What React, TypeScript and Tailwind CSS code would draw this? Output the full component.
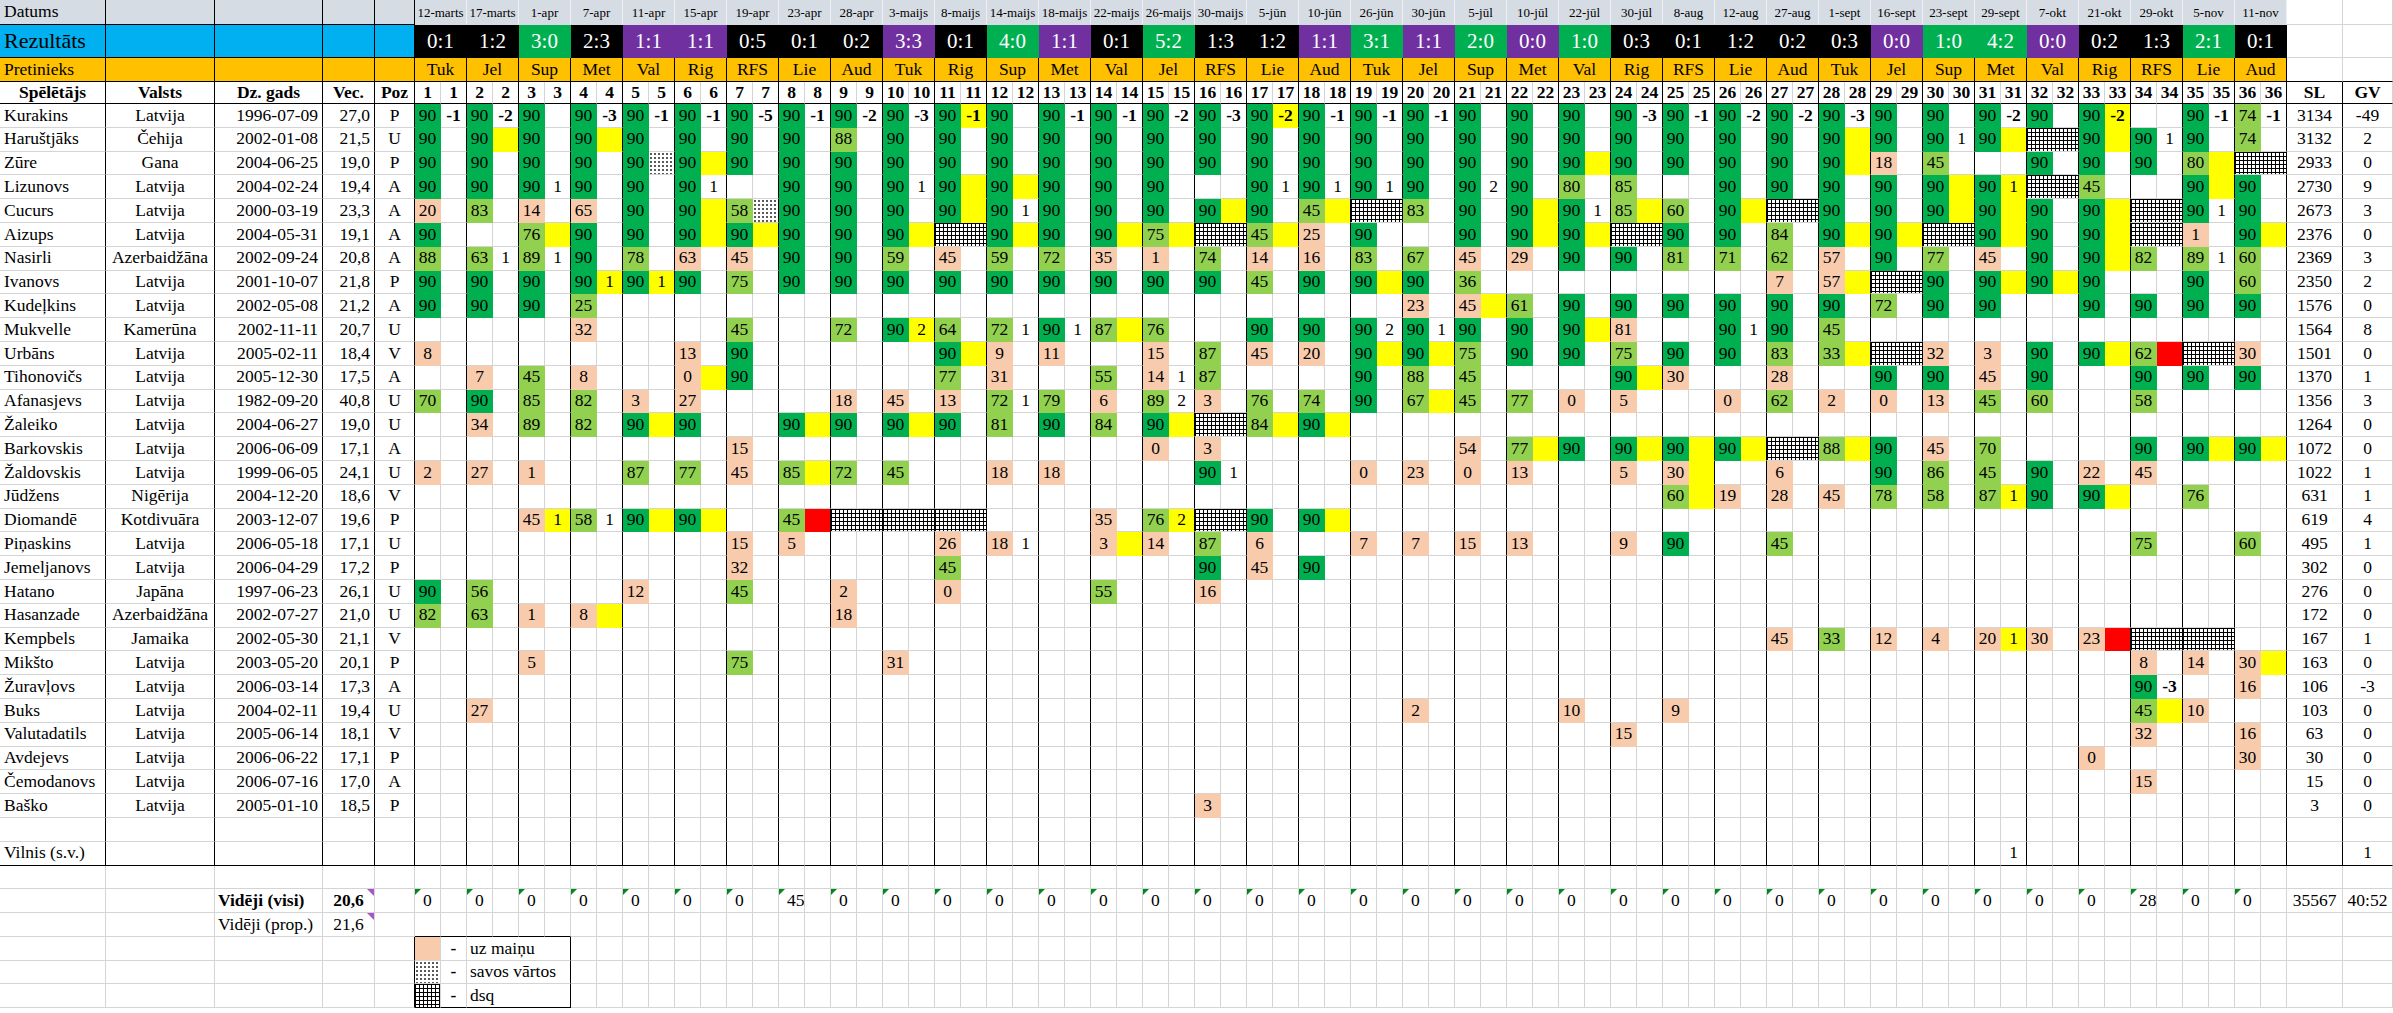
import React from "react";

const G = "grid grid-cols-[106px_109px_108px_52px_40px_repeat(72,26px)_56px_50px]";
const CB = "relative flex items-center border-r border-b whitespace-nowrap overflow-visible";
const GRAY = "border-r-[#d4d4d4] border-b-[#d4d4d4]";
const DOTS =
  "bg-white bg-[image:radial-gradient(circle,#000_0.6px,transparent_0.9px)] bg-[length:4px_4px]";
const HATCH =
  "bg-white bg-[image:linear-gradient(90deg,#000_1px,transparent_1px),linear-gradient(#000_1px,transparent_1px)] bg-[length:4px_4px]";

type Res = "B" | "G" | "P";
const MATCHES: [string, string, Res, string][] = [
  ["12-marts", "0:1", "B", "Tuk"],
  ["17-marts", "1:2", "B", "Jel"],
  ["1-apr", "3:0", "G", "Sup"],
  ["7-apr", "2:3", "B", "Met"],
  ["11-apr", "1:1", "P", "Val"],
  ["15-apr", "1:1", "P", "Rig"],
  ["19-apr", "0:5", "B", "RFS"],
  ["23-apr", "0:1", "B", "Lie"],
  ["28-apr", "0:2", "B", "Aud"],
  ["3-maijs", "3:3", "P", "Tuk"],
  ["8-maijs", "0:1", "B", "Rig"],
  ["14-maijs", "4:0", "G", "Sup"],
  ["18-maijs", "1:1", "P", "Met"],
  ["22-maijs", "0:1", "B", "Val"],
  ["26-maijs", "5:2", "G", "Jel"],
  ["30-maijs", "1:3", "B", "RFS"],
  ["5-jūn", "1:2", "B", "Lie"],
  ["10-jūn", "1:1", "P", "Aud"],
  ["26-jūn", "3:1", "G", "Tuk"],
  ["30-jūn", "1:1", "P", "Jel"],
  ["5-jūl", "2:0", "G", "Sup"],
  ["10-jūl", "0:0", "P", "Met"],
  ["22-jūl", "1:0", "G", "Val"],
  ["30-jūl", "0:3", "B", "Rig"],
  ["8-aug", "0:1", "B", "RFS"],
  ["12-aug", "1:2", "B", "Lie"],
  ["27-aug", "0:2", "B", "Aud"],
  ["1-sept", "0:3", "B", "Tuk"],
  ["16-sept", "0:0", "P", "Jel"],
  ["23-sept", "1:0", "G", "Sup"],
  ["29-sept", "4:2", "G", "Met"],
  ["7-okt", "0:0", "P", "Val"],
  ["21-okt", "0:2", "B", "Rig"],
  ["29-okt", "1:3", "B", "RFS"],
  ["5-nov", "2:1", "G", "Lie"],
  ["11-nov", "0:1", "B", "Aud"],
];

const RES: Record<Res, string> = {
  B: "bg-black border-r-black border-b-black",
  G: "bg-[#00b050] border-r-[#00b050] border-b-[#00b050]",
  P: "bg-[#7030a0] border-r-[#7030a0] border-b-[#7030a0]",
};

type Player = {
  n: string;
  c: string;
  d: string;
  a: string;
  p: string;
  sl: string;
  gv: string;
  def: string;
  o: Record<number, string>;
};

const PLAYERS: Player[] = [
  { n: "Kurakins", c: "Latvija", d: "1996-07-09", a: "27,0", p: "P", sl: "3134", gv: "-49", def: "90G",
    o: { 1: "90G,-1", 2: "90G,-2", 4: "90G,-3", 5: "90G,-1", 6: "90G,-1", 7: "90G,-5", 8: "90G,-1", 9: "90G,-2", 10: "90G,-3", 11: "90G,-1Y", 13: "90G,-1", 14: "90G,-1", 15: "90G,-2", 16: "90G,-3", 17: "90G,-2Y", 18: "90G,-1", 19: "90G,-1", 20: "90G,-1", 24: "90G,-3", 25: "90G,-1", 26: "90G,-2", 27: "90G,-2", 28: "90G,-3", 31: "90G,-2", 33: "90G,-2Y", 34: ".", 35: "90G,-1", 36: "74L,-1" } },
  { n: "Haruštjāks", c: "Čehija", d: "2002-01-08", a: "21,5", p: "U", sl: "3132", gv: "2", def: "90G",
    o: { 2: "90G,Y", 4: "90G,Y", 9: "88L", 28: "90G,Y", 30: "90G,1", 31: "90G,Y", 32: "D", 33: "90G,Y", 34: "90G,1", 36: "74L" } },
  { n: "Zūre", c: "Gana", d: "2004-06-25", a: "19,0", p: "P", sl: "2933", gv: "0", def: "90G",
    o: { 5: "90G,S", 6: "90G,Y", 23: "90G,Y", 28: "90G,Y", 29: "18P", 30: "45L", 31: ".", 35: "80L,Y", 36: "D" } },
  { n: "Lizunovs", c: "Latvija", d: "2004-02-24", a: "19,4", p: "A", sl: "2730", gv: "9", def: "90G",
    o: { 3: "90G,1", 6: "90G,1", 7: ".", 10: "90G,1", 11: "90G,Y", 12: "90G,Y", 16: ".", 17: "90G,1", 18: "90G,1", 19: "90G,1", 21: "90G,2", 23: "80L", 24: "85L", 25: ".", 30: "90G,Y", 31: "90G,1Y", 32: "D", 33: "45L", 34: ".", 35: "90G,Y" } },
  { n: "Cucurs", c: "Latvija", d: "2000-03-19", a: "23,3", p: "A", sl: "2673", gv: "3", def: "90G",
    o: { 1: "20P", 2: "83L", 3: "14P", 4: "65P", 6: "90G,Y", 7: "58L,S", 11: "90G,Y", 12: "90G,1", 16: "90G,Y", 18: "45L,Y", 19: "D", 20: "83L", 22: "90G,Y", 23: "90G,1", 24: "85L,Y", 25: "60L", 26: "90G,Y", 27: "D", 30: "90G,Y", 31: "90G,Y", 33: "90G,Y", 34: "D", 35: "90G,1" } },
  { n: "Aizups", c: "Latvija", d: "2004-05-31", a: "19,1", p: "A", sl: "2376", gv: "0", def: "90G",
    o: { 2: ".", 3: "76L,Y", 6: "90G,Y", 7: "90G,Y", 10: "90G,Y", 11: "D", 12: "90G,Y", 14: "90G,Y", 15: "75L,Y", 16: "D", 17: "45L,Y", 18: "25P", 20: ".", 22: "90G,Y", 23: "90G,Y", 24: "D", 27: "84L", 28: "90G,Y", 29: "90G,Y", 30: "D", 31: "90G,Y", 33: "90G,Y", 34: "D", 35: "1P", 36: "90G,Y" } },
  { n: "Nasirli", c: "Azerbaidžāna", d: "2002-09-24", a: "20,8", p: "A", sl: "2369", gv: "3", def: ".",
    o: { 1: "88L", 2: "63L,1", 3: "89L,1", 4: "90G", 5: "78L", 6: "63P", 7: "45P", 8: "90G", 9: "90G", 10: "59L", 11: "45P", 12: "59L", 13: "72L", 14: "35P", 15: "1P", 16: "74L", 17: "14P", 18: "16P", 19: "83L", 20: "67L", 21: "45P", 22: "29P", 23: "90G", 24: "90G", 25: "81L", 26: "71L", 27: "62L", 28: "57P", 29: "90G", 30: "77L", 31: "45P", 32: "90G", 33: "90G,Y", 34: "82L", 35: "89L,1", 36: "60L" } },
  { n: "Ivanovs", c: "Latvija", d: "2001-10-07", a: "21,8", p: "P", sl: "2350", gv: "2", def: "90G",
    o: { 4: "90G,1Y", 5: "90G,1Y", 7: "75L", 17: "45L", 19: "90G,Y", 21: "36L", 22: ".", 23: ".", 24: ".", 25: ".", 26: ".", 27: "7P", 28: "57P,Y", 29: "D", 31: "90G,Y", 32: "90G,Y", 34: ".", 36: "60L" } },
  { n: "Kudeļkins", c: "Latvija", d: "2002-05-08", a: "21,2", p: "A", sl: "1576", gv: "0", def: ".",
    o: { 1: "90G", 2: "90G", 3: "90G", 4: "25L", 20: "23P", 21: "45P,Y", 22: "61L", 23: "90G", 24: "90G", 25: "90G", 26: "90G", 27: "90G", 28: "90G", 29: "72L", 30: "90G", 31: "90G", 33: "90G", 34: "90G", 35: "90G", 36: "90G" } },
  { n: "Mukvelle", c: "Kamerūna", d: "2002-11-11", a: "20,7", p: "U", sl: "1564", gv: "8", def: ".",
    o: { 4: "32P", 7: "45L", 9: "72L", 10: "90G,2Y", 11: "64L", 12: "72L,1", 13: "90G,1", 14: "87L,Y", 15: "76L", 17: "90G", 18: "90G", 19: "90G,2", 20: "90G,1", 21: "90G", 22: "90G", 23: "90G,Y", 24: "81P", 26: "90G,1", 27: "90G", 28: "45L" } },
  { n: "Urbāns", c: "Latvija", d: "2005-02-11", a: "18,4", p: "V", sl: "1501", gv: "0", def: ".",
    o: { 1: "8P", 6: "13P", 7: "90G", 11: "90G,Y", 12: "9P", 13: "11P", 15: "15P", 16: "87L", 17: "45P", 18: "20P", 19: "90G,Y", 20: "90G,Y", 21: "75L", 22: "90G", 23: "90G", 24: "75L", 25: "90G", 26: "90G", 27: "83L", 28: "33L,Y", 29: "D", 30: "32P", 31: "3P", 32: "90G", 33: "90G,Y", 34: "62L,R", 35: "D", 36: "30P" } },
  { n: "Tihonovičs", c: "Latvija", d: "2005-12-30", a: "17,5", p: "A", sl: "1370", gv: "1", def: ".",
    o: { 2: "7P", 3: "45L", 4: "8P", 6: "0P,Y", 7: "90G", 11: "77L", 12: "31P", 14: "55L", 15: "14P,1", 16: "87L", 19: "90G", 20: "88L", 21: "45L", 24: "90G,Y", 25: "30P", 27: "28P", 29: "90G", 30: "90G", 31: "45P", 32: "90G", 34: "90G", 35: "90G", 36: "90G" } },
  { n: "Afanasjevs", c: "Latvija", d: "1982-09-20", a: "40,8", p: "U", sl: "1356", gv: "3", def: ".",
    o: { 1: "70L", 2: "90G", 3: "85L", 4: "82L", 5: "3P", 6: "27P", 9: "18P", 10: "45P", 11: "13P", 12: "72L,1", 13: "79L", 14: "6P", 15: "89L,2", 16: "3P", 17: "76L", 18: "74L", 19: "90G", 20: "67L,Y", 21: "45L", 22: "77L", 23: "0P", 24: "5P", 26: "0P", 27: "62L", 28: "2P", 29: "0P", 30: "13P", 31: "45L", 32: "60L", 34: "58L" } },
  { n: "Žaleiko", c: "Latvija", d: "2004-06-27", a: "19,0", p: "U", sl: "1264", gv: "0", def: ".",
    o: { 2: "34P", 3: "89L", 4: "82L", 5: "90G,Y", 6: "90G", 8: "90G,Y", 9: "90G", 10: "90G,Y", 11: "90G", 12: "81L", 13: "90G", 14: "84L", 15: "90G,Y", 16: "D", 17: "84L,Y", 18: "90G,Y" } },
  { n: "Barkovskis", c: "Latvija", d: "2006-06-09", a: "17,1", p: "A", sl: "1072", gv: "0", def: ".",
    o: { 7: "15P", 15: "0P", 16: "3P", 21: "54P", 22: "77L,Y", 23: "90G", 24: "90G,Y", 25: "90G,Y", 26: "90G,Y", 27: "D", 28: "88L,Y", 29: "90G", 30: "45P", 31: "70L", 34: "90G", 35: "90G,Y", 36: "90G,Y" } },
  { n: "Žaldovskis", c: "Latvija", d: "1999-06-05", a: "24,1", p: "U", sl: "1022", gv: "1", def: ".",
    o: { 1: "2P", 2: "27P", 3: "1P", 5: "87L", 6: "77L", 7: "45P", 8: "85L,Y", 9: "72L", 10: "45L", 12: "18P", 13: "18P", 16: "90G,1", 19: "0P", 20: "23P", 21: "0P", 22: "13P", 24: "5P", 25: "30P,Y", 27: "6P", 29: "90G", 30: "86L", 31: "45L", 32: "90G", 33: "22P", 34: "45P" } },
  { n: "Jūdžens", c: "Nigērija", d: "2004-12-20", a: "18,6", p: "V", sl: "631", gv: "1", def: ".",
    o: { 25: "60L,Y", 26: "19P", 27: "28P", 28: "45P", 29: "78L", 30: "58L", 31: "87L,1Y", 32: "90G", 33: "90G,Y", 35: "76L" } },
  { n: "Diomandē", c: "Kotdivuāra", d: "2003-12-07", a: "19,6", p: "P", sl: "619", gv: "4", def: ".",
    o: { 3: "45P,1Y", 4: "58L,1", 5: "90G,Y", 6: "90G,Y", 8: "45L,R", 9: "D", 10: "D", 11: "D", 14: "35P", 15: "76L,2Y", 16: "D", 17: "90G", 18: "90G,Y" } },
  { n: "Piņaskins", c: "Latvija", d: "2006-05-18", a: "17,1", p: "U", sl: "495", gv: "1", def: ".",
    o: { 7: "15P", 8: "5P", 11: "26P", 12: "18P,1", 14: "3P,Y", 15: "14P", 16: "87L", 17: "6P", 19: "7P", 20: "7P", 21: "15P", 22: "13P", 24: "9P", 25: "90G", 27: "45L", 34: "75L", 36: "60L" } },
  { n: "Jemeljanovs", c: "Latvija", d: "2006-04-29", a: "17,2", p: "P", sl: "302", gv: "0", def: ".",
    o: { 7: "32P", 11: "45L", 16: "90G", 17: "45P", 18: "90G" } },
  { n: "Hatano", c: "Japāna", d: "1997-06-23", a: "26,1", p: "U", sl: "276", gv: "0", def: ".",
    o: { 1: "90G", 2: "56L", 5: "12P", 7: "45L", 9: "2P", 11: "0P", 14: "55L", 16: "16P" } },
  { n: "Hasanzade", c: "Azerbaidžāna", d: "2002-07-27", a: "21,0", p: "U", sl: "172", gv: "0", def: ".",
    o: { 1: "82L", 2: "63L", 3: "1P", 4: "8P,Y", 9: "18P" } },
  { n: "Kempbels", c: "Jamaika", d: "2002-05-30", a: "21,1", p: "V", sl: "167", gv: "1", def: ".",
    o: { 27: "45P", 28: "33L", 29: "12P", 30: "4P", 31: "20P,1Y", 32: "30P", 33: "23P,R", 34: "D", 35: "D" } },
  { n: "Mikšto", c: "Latvija", d: "2003-05-20", a: "20,1", p: "P", sl: "163", gv: "0", def: ".",
    o: { 3: "5P", 7: "75L", 10: "31P", 34: "8P", 35: "14P", 36: "30P,Y" } },
  { n: "Žuravļovs", c: "Latvija", d: "2006-03-14", a: "17,3", p: "A", sl: "106", gv: "-3", def: ".",
    o: { 34: "90G,-3", 36: "16P" } },
  { n: "Buks", c: "Latvija", d: "2004-02-11", a: "19,4", p: "U", sl: "103", gv: "0", def: ".",
    o: { 2: "27P", 20: "2P", 23: "10P", 25: "9P", 34: "45L,Y", 35: "10P" } },
  { n: "Valutadatils", c: "Latvija", d: "2005-06-14", a: "18,1", p: "V", sl: "63", gv: "0", def: ".",
    o: { 24: "15P", 34: "32P", 36: "16P" } },
  { n: "Avdejevs", c: "Latvija", d: "2006-06-22", a: "17,1", p: "P", sl: "30", gv: "0", def: ".",
    o: { 33: "0P", 36: "30P" } },
  { n: "Čemodanovs", c: "Latvija", d: "2006-07-16", a: "17,0", p: "A", sl: "15", gv: "0", def: ".",
    o: { 34: "15P" } },
  { n: "Baško", c: "Latvija", d: "2005-01-10", a: "18,5", p: "P", sl: "3", gv: "0", def: ".",
    o: { 16: "3P" } },
];

const AF: Record<string, string> = {
  "": "border-r-[#d4d4d4] border-b-[#d4d4d4]",
  G: "bg-[#00b050] border-r-[#00b050] border-b-[#00b050]",
  L: "bg-[#92d050] border-r-[#92d050] border-b-[#92d050]",
  P: "bg-[#f8cbad] border-r-[#f8cbad] border-b-[#f8cbad]",
};
const BF: Record<string, string> = {
  "": "border-r-black border-b-[#d4d4d4]",
  Y: "bg-[#ffff00] border-r-black border-b-[#ffff00]",
  R: "bg-[#ff0000] border-r-black border-b-[#ff0000]",
  S: DOTS + " border-r-black border-b-[#d4d4d4]",
};

function MatchCells({ tok, bottom }: { tok: string; bottom?: boolean }) {
  if (tok === "D") {
    return <div className={`${CB} col-span-2 ${HATCH} border-r-black ${bottom ? "border-b-black" : "border-b-[#d4d4d4]"}`} />;
  }
  let a = "";
  let af = "";
  let b = "";
  let bf = "";
  if (tok && tok !== ".") {
    const [A, B] = tok.split(",");
    if (A) {
      af = A.slice(-1);
      a = A.slice(0, -1);
    }
    if (B) {
      if (B === "S") bf = "S";
      else if (B.endsWith("Y") || B.endsWith("R")) {
        bf = B.slice(-1);
        b = B.slice(0, -1);
      } else b = B;
    }
  }
  return (
    <>
      <div className={`${CB} justify-center ${AF[af]} ${bottom ? "border-b-black" : ""}`}>{a}</div>
      <div className={`${CB} justify-center ${BF[bf]} ${b.startsWith("-") ? "font-bold" : ""} ${bottom ? "border-b-black" : ""}`}>
        {b}
      </div>
    </>
  );
}

const LEFT = "border-r-black border-b-[#d4d4d4]";

function Greentri() {
  return (
    <svg className="absolute left-0 top-0" width="6" height="6" viewBox="0 0 6 6">
      <path d="M0 0H6L0 6Z" fill="#008a1e" />
    </svg>
  );
}
function Purpletri() {
  return (
    <svg className="absolute right-0 top-0" width="7" height="7" viewBox="0 0 7 7">
      <path d="M0 0H7V7Z" fill="#a855c8" />
    </svg>
  );
}

function GrayCells({ n }: { n: number }) {
  return (
    <>
      {Array.from({ length: n }).map((_, i) => (
        <div key={i} className={`${CB} ${GRAY}`} />
      ))}
    </>
  );
}

export default function App() {
  return (
    <div className="w-[2393px] h-[1013px] overflow-hidden bg-white [font-family:'Liberation_Serif','Times_New_Roman',serif] text-[17.5px] leading-none text-black">
      {/* Datums */}
      <div className={`${G} h-[25px]`}>
        <div className={`${CB} bg-[#d6dce4] border-r-black border-b-black justify-start pl-[4px]`}>Datums</div>
        {[0, 1, 2, 3].map((i) => (
          <div key={i} className={`${CB} bg-[#d6dce4] border-r-black border-b-black`} />
        ))}
        {MATCHES.map((m, i) => (
          <div key={i} className={`${CB} col-span-2 justify-center bg-[#d6dce4] border-r-[#eef0f4] border-b-[#d6dce4] text-[13px]`}>
            {m[0]}
          </div>
        ))}
        <GrayCells n={2} />
      </div>
      {/* Rezultāts */}
      <div className={`${G} h-[33px]`}>
        <div className={`${CB} bg-[#00b0f0] border-r-black border-b-black justify-start pl-[4px] text-[22px]`}>Rezultāts</div>
        {[0, 1, 2, 3].map((i) => (
          <div key={i} className={`${CB} bg-[#00b0f0] border-r-black border-b-black`} />
        ))}
        {MATCHES.map((m, i) => (
          <div key={i} className={`${CB} col-span-2 justify-center text-white text-[21px] ${RES[m[2]]}`}>
            {m[1]}
          </div>
        ))}
        <GrayCells n={2} />
      </div>
      {/* Pretinieks */}
      <div className={`${G} h-[24px]`}>
        <div className={`${CB} bg-[#ffc000] border-r-black border-b-black justify-start pl-[4px]`}>Pretinieks</div>
        {[0, 1, 2, 3].map((i) => (
          <div key={i} className={`${CB} bg-[#ffc000] border-r-black border-b-black`} />
        ))}
        {MATCHES.map((m, i) => (
          <div key={i} className={`${CB} col-span-2 justify-center bg-[#ffc000] border-r-black border-b-black`}>
            {m[3]}
          </div>
        ))}
        <div className={`${CB} border-r-[#d4d4d4] border-b-black`} />
        <div className={`${CB} border-r-[#d4d4d4] border-b-black`} />
      </div>
      {/* Header */}
      <div className={`${G} h-[22px] font-bold`}>
        {["Spēlētājs", "Valsts", "Dz. gads", "Vec.", "Poz"].map((t) => (
          <div key={t} className={`${CB} justify-center border-r-black border-b-black`}>
            {t}
          </div>
        ))}
        {MATCHES.map((_, i) => (
          <React.Fragment key={i}>
            <div className={`${CB} justify-center border-r-[#d4d4d4] border-b-black`}>{i + 1}</div>
            <div className={`${CB} justify-center border-r-black border-b-black`}>{i + 1}</div>
          </React.Fragment>
        ))}
        <div className={`${CB} justify-center border-r-black border-b-black`}>SL</div>
        <div className={`${CB} justify-center border-r-[#d4d4d4] border-b-black`}>GV</div>
      </div>
      {/* Players */}
      {PLAYERS.map((p) => (
        <div key={p.n} className={`${G} h-[23.8px]`}>
          <div className={`${CB} ${LEFT} justify-start pl-[4px]`}>{p.n}</div>
          <div className={`${CB} ${LEFT} justify-center`}>{p.c}</div>
          <div className={`${CB} ${LEFT} justify-end pr-[4px]`}>{p.d}</div>
          <div className={`${CB} ${LEFT} justify-end pr-[4px]`}>{p.a}</div>
          <div className={`${CB} ${LEFT} justify-center`}>{p.p}</div>
          {MATCHES.map((_, i) => (
            <MatchCells key={i} tok={p.o[i + 1] ?? p.def} />
          ))}
          <div className={`${CB} ${LEFT} justify-center`}>{p.sl}</div>
          <div className={`${CB} ${GRAY} justify-center`}>{p.gv}</div>
        </div>
      ))}
      {/* empty row */}
      <div className={`${G} h-[23.8px]`}>
        {[0, 1, 2, 3, 4].map((i) => (
          <div key={i} className={`${CB} ${LEFT}`} />
        ))}
        {MATCHES.map((_, i) => (
          <MatchCells key={i} tok="." />
        ))}
        <div className={`${CB} ${LEFT}`} />
        <div className={`${CB} ${GRAY}`} />
      </div>
      {/* Vilnis */}
      <div className={`${G} h-[23.8px]`}>
        <div className={`${CB} border-r-black border-b-black justify-start pl-[4px]`}>Vilnis (s.v.)</div>
        {[0, 1, 2, 3].map((i) => (
          <div key={i} className={`${CB} border-r-black border-b-black`} />
        ))}
        {MATCHES.map((_, i) => (
          <MatchCells key={i} tok={i === 30 ? ",1" : "."} bottom />
        ))}
        <div className={`${CB} border-r-black border-b-black`} />
        <div className={`${CB} border-r-[#d4d4d4] border-b-black justify-center`}>1</div>
      </div>
      {/* blank */}
      <div className={`${G} h-[23.8px]`}>
        <GrayCells n={79} />
      </div>
      {/* Vidēji (visi) */}
      <div className={`${G} h-[23.8px]`}>
        <div className={`${CB} ${GRAY}`} />
        <div className={`${CB} ${GRAY}`} />
        <div className={`${CB} ${GRAY} justify-start pl-[3px] font-bold`}>Vidēji (visi)</div>
        <div className={`${CB} ${GRAY} justify-center font-bold`}>
          20,6
          <Purpletri />
        </div>
        <div className={`${CB} ${GRAY}`} />
        {MATCHES.map((_, i) => (
          <React.Fragment key={i}>
            <div className={`${CB} ${GRAY} justify-start pl-[8px]`}>
              <Greentri />
              {i === 7 ? "45" : i === 33 ? "28" : "0"}
            </div>
            <div className={`${CB} ${GRAY}`} />
          </React.Fragment>
        ))}
        <div className={`${CB} ${GRAY} justify-center`}>35567</div>
        <div className={`${CB} ${GRAY} justify-center`}>40:52</div>
      </div>
      {/* Vidēji (prop.) */}
      <div className={`${G} h-[23.8px]`}>
        <div className={`${CB} ${GRAY}`} />
        <div className={`${CB} ${GRAY}`} />
        <div className={`${CB} ${GRAY} justify-start pl-[3px]`}>Vidēji (prop.)</div>
        <div className={`${CB} ${GRAY} justify-center`}>
          21,6
          <Purpletri />
        </div>
        <div className={`${CB} ${GRAY}`} />
        {[0, 1, 2, 3, 4, 5].map((i) => (
          <div key={i} className={`${CB} border-r-[#d4d4d4] border-b-black`} />
        ))}
        <GrayCells n={68} />
      </div>
      {/* Legend */}
      {[
        { sw: "bg-[#f8cbad] border-r-[#d4d4d4] border-b-[#d4d4d4]", t: "uz maiņu" },
        { sw: DOTS + " border-r-[#d4d4d4] border-b-[#d4d4d4]", t: "savos vārtos" },
        { sw: HATCH + " border-r-[#d4d4d4] border-b-black", t: "dsq" },
      ].map((l, k) => (
        <div key={l.t} className={`${G} h-[23.8px]`}>
          <GrayCells n={4} />
          <div className={`${CB} border-r-black border-b-[#d4d4d4]`} />
          <div className={`${CB} ${l.sw}`} />
          <div className={`${CB} justify-center font-bold border-r-[#d4d4d4] ${k === 2 ? "border-b-black" : "border-b-[#d4d4d4]"}`}>-</div>
          <div className={`${CB} col-span-4 justify-start pl-[3px] border-r-black ${k === 2 ? "border-b-black" : "border-b-[#d4d4d4]"}`}>
            {l.t}
          </div>
          <GrayCells n={68} />
        </div>
      ))}
    </div>
  );
}
